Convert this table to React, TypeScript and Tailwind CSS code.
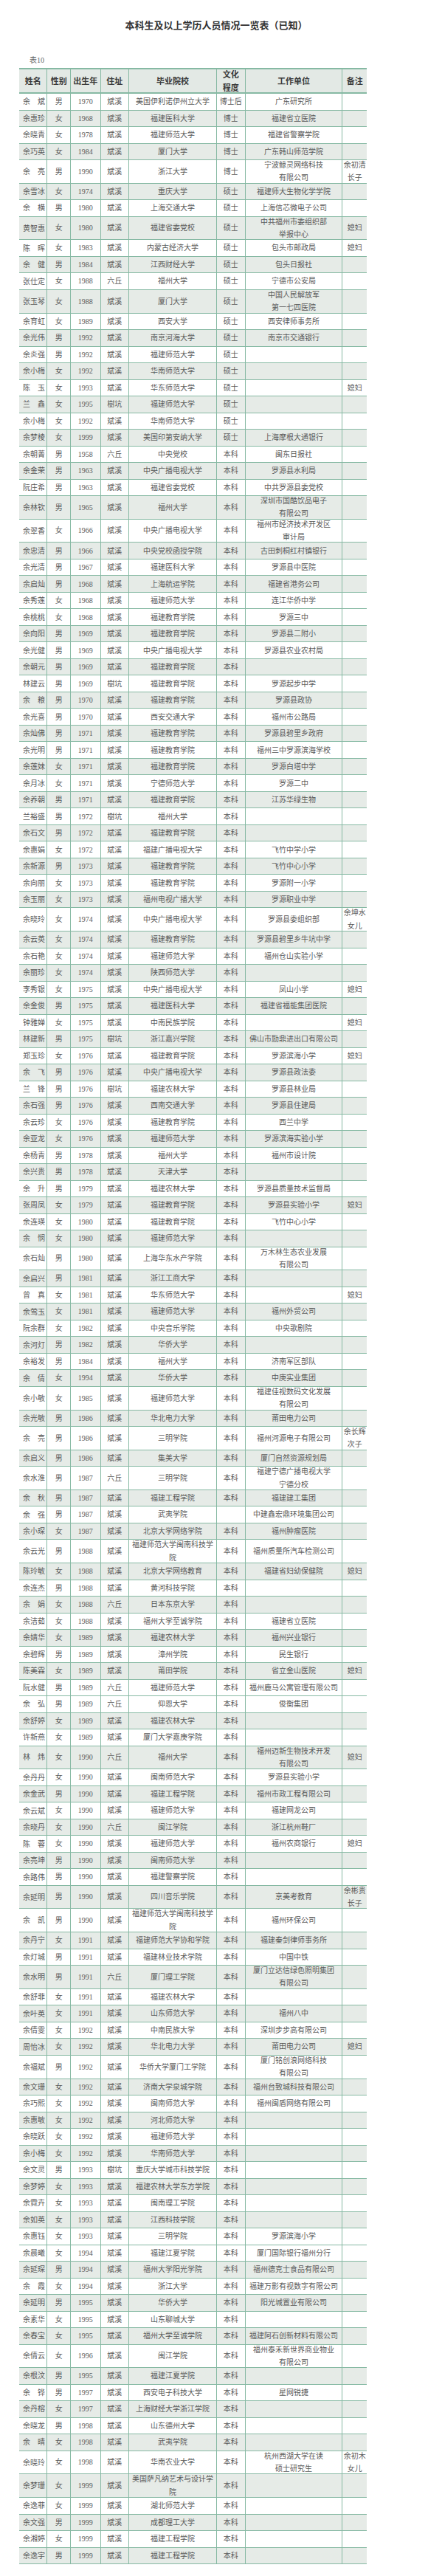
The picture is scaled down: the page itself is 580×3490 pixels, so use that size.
import React from 'react'

/* ── Data: name|sex|year|addr|school|degree|work|note   ("/" = line break) ── */
const RAW = `余斌|男|1970|斌溪|美国伊利诺伊州立大学|博士后|广东研究所|
余惠珍|女|1968|斌溪|福建医科大学|博士|福建省立医院|
余晓青|女|1978|斌溪|福建师范大学|博士|福建省警察学院|
余巧英|女|1984|斌溪|厦门大学|博士|广东韩山师范学院|
余亮|男|1990|斌溪|浙江大学|博士|宁波鲸灵网络科技/有限公司|余初清/长子
余雪冰|女|1974|斌溪|重庆大学|硕士|福建师大生物化学学院|
余横|男|1980|斌溪|上海交通大学|硕士|上海信芯微电子公司|
黄智惠|女|1980|斌溪|福建省委党校|硕士|中共福州市委组织部/举报中心|媳妇
陈晖|女|1983|斌溪|内蒙古经济大学|硕士|包头市邮政局|媳妇
余健|男|1984|斌溪|江西财经大学|硕士|包头日报社|
张仕定|女|1988|六丘|福州大学|硕士|宁德市公安局|
张玉琴|女|1988|斌溪|厦门大学|硕士|中国人民解放军/第一七四医院|
余育虹|女|1989|斌溪|西安大学|硕士|西安律师事务所|
余光伟|男|1992|斌溪|南京河海大学|硕士|南京市交通银行|
余炎强|男|1992|斌溪|福建师范大学|硕士||
余小梅|女|1992|斌溪|华南师范大学|硕士||
陈玉|女|1993|斌溪|华东师范大学|硕士||媳妇
兰鑫|女|1995|樹坑|福建师范大学|硕士||
余小梅|女|1992|斌溪|华南师范大学|硕士||
余梦棱|女|1999|斌溪|美国印第安纳大学|硕士|上海摩根大通银行|
余朝菁|男|1958|六丘|中央党校|本科|闽东日报社|
余金荣|男|1963|斌溪|中央广播电视大学|本科|罗源县水利局|
阮庄希|男|1963|斌溪|福建省委党校|本科|中共罗源县委党校|
余林钦|男|1965|斌溪|福州大学|本科|深圳市国酷饮品电子/有限公司|
余翠香|女|1966|斌溪|中央广播电视大学|本科|福州市经济技术开发区/审计局|
余忠清|男|1966|斌溪|中央党校函授学院|本科|古田刺桐红村镇银行|
余光清|男|1967|斌溪|福建医科大学|本科|罗源县中医院|
余启灿|男|1968|斌溪|上海航运学院|本科|福建省港务公司|
余秀莲|女|1968|斌溪|福建师范大学|本科|连江华侨中学|
余桃桃|女|1968|斌溪|福建教育学院|本科|罗源三中|
余向阳|男|1969|斌溪|福建教育学院|本科|罗源县二附小|
余光健|男|1969|斌溪|中央广播电视大学|本科|罗源县农业农村局|
余朝元|男|1969|斌溪|福建教育学院|本科||
林建云|男|1969|樹坑|福建教育学院|本科|罗源起步中学|
余粮|男|1970|斌溪|福建教育学院|本科|罗源县政协|
余光喜|男|1970|斌溪|西安交通大学|本科|福州市公路局|
余灿佛|男|1971|斌溪|福建教育学院|本科|罗源县碧里乡政府|
余光明|男|1971|斌溪|福建教育学院|本科|福州三中罗源滨海学校|
余莲妹|女|1971|斌溪|福建教育学院|本科|罗源白塔中学|
余月冰|女|1971|斌溪|宁德师范大学|本科|罗源二中|
余养朝|男|1971|斌溪|福建教育学院|本科|江苏华绿生物|
兰裕盛|男|1972|樹坑|福州大学|本科||
余石文|男|1972|斌溪|福建教育学院|本科||
余惠娟|女|1972|斌溪|福建广播电视大学|本科|飞竹中学小学|
余新源|男|1973|斌溪|福建教育学院|本科|飞竹中心小学|
余向丽|女|1973|斌溪|福建教育学院|本科|罗源附一小学|
余玉丽|女|1973|斌溪|福州电视广播大学|本科|罗源职业中学|
余晓玲|女|1974|斌溪|中央广播电视大学|本科|罗源县委组织部|余坤水/女儿
余云英|女|1974|斌溪|福建教育学院|本科|罗源县碧里乡牛坑中学|
余石艳|女|1974|斌溪|福建师范大学|本科|福州仓山实验小学|
余丽珍|女|1974|斌溪|陕西师范大学|本科||
李秀银|女|1975|斌溪|中央广播电视大学|本科|凤山小学|媳妇
余金俊|男|1975|斌溪|福建医科大学|本科|福建省福能集团医院|
钟雅婵|女|1975|斌溪|中南民族学院|本科||媳妇
林建新|男|1975|樹坑|浙江嘉兴学院|本科|佛山市励鼎进出口有限公司|
郑玉珍|女|1976|斌溪|福建教育学院|本科|罗源滨海小学|媳妇
余飞|男|1976|斌溪|中央广播电视大学|本科|罗源县政法委|
兰锋|男|1976|樹坑|福建农林大学|本科|罗源县林业局|
余石强|男|1976|斌溪|西南交通大学|本科|罗源县住建局|
余云珍|女|1976|斌溪|福建教育学院|本科|西兰中学|
余亚龙|女|1976|斌溪|福建师范大学|本科|罗源滨海实验小学|
余杨青|男|1978|斌溪|福州大学|本科|福州市设计院|
余兴贵|男|1978|斌溪|天津大学|本科||
余升|男|1979|斌溪|福建农林大学|本科|罗源县质量技术监督局|
张周凤|女|1979|斌溪|福建教育学院|本科|罗源县实验小学|媳妇
余连瑛|女|1980|斌溪|福建教育学院|本科|飞竹中心小学|
余悯|女|1980|斌溪|福建师范大学|本科||
余石灿|男|1980|斌溪|上海华东水产学院|本科|万木林生态农业发展/有限公司|
余启兴|男|1981|斌溪|浙江工商大学|本科||
曾真|女|1981|斌溪|华东师范大学|本科||媳妇
余莺玉|女|1981|斌溪|福建师范大学|本科|福州外贸公司|
阮余群|女|1982|斌溪|中央音乐学院|本科|中央歌剧院|
余河灯|男|1982|斌溪|华侨大学|本科||
余裕发|男|1984|斌溪|福州大学|本科|济南军区部队|
余倩|女|1994|斌溪|华侨大学|本科|中庚实业集团|
余小敏|女|1985|斌溪|福建师范大学|本科|福建佳视数码文化发展/有限公司|
余光敏|男|1986|斌溪|华北电力大学|本科|莆田电力公司|
余亮|男|1986|斌溪|三明学院|本科|福州河源电子有限公司|余长辉/次子
余启义|男|1986|斌溪|集美大学|本科|厦门自然资源规划局|
余水淮|男|1987|六丘|三明学院|本科|福建宁德广播电视大学/宁德分校|
余秋|男|1987|斌溪|福建工程学院|本科|福建建工集团|
余强|男|1987|斌溪|武夷学院||中建鑫宏鼎环境集团公司|
余小琛|女|1987|斌溪|北京大学网络学院|本科|福州肿瘤医院|
余云光|男|1988|斌溪|福建师范大学闽南科技学/院|本科|福州质量所汽车检测公司|
陈玲敏|女|1988|斌溪|北京大学网络教育|本科|福建省妇幼保健院|媳妇
余连杰|男|1988|斌溪|黄河科技学院|本科||
余娟|女|1988|六丘|日本东京大学|本科||
余洁茹|女|1988|斌溪|福州大学至诚学院|本科|福建省立医院|
余婧华|女|1989|斌溪|福建农林大学|本科|福州兴业银行|
余碧辉|男|1989|斌溪|漳州学院|本科|民生银行|
陈美霖|女|1989|斌溪|莆田学院|本科|省立金山医院|媳妇
阮水健|男|1989|六丘|福建师范大学|本科|福州鹿马公寓管理有限公司|
余弘|男|1989|六丘|仰恩大学|本科|俊衡集团|
余舒婷|女|1989|斌溪|福建农林大学|本科||
许新燕|女|1989|斌溪|厦门大学嘉庚学院|本科||
林炜|女|1990|六丘|福州大学|本科|福州迈新生物技术开发/有限公司|媳妇
余丹丹|女|1990|斌溪|闽南师范大学|本科|罗源县实验小学|
余金武|男|1990|斌溪|福建工程学院|本科|福州市政工程有限公司|
余云斌|女|1990|斌溪|福建师范大学|本科|福建网龙公司|
余晓丹|女|1990|六丘|闽江学院|本科|浙江杭州鞋厂|
陈蓉|女|1990|斌溪|福建师范大学|本科|福州农商银行|媳妇
余亮坤|男|1990|斌溪|闽南师范大学|本科||
余路伟|男|1990|斌溪|福建警察学院|本科||
余延明|男|1990|斌溪|四川音乐学院|本科|京美考教育|余彬贵/长子
余凯|男|1990|斌溪|福建师范大学闽南科技学/院|本科|福州环保公司|
余丹宁|女|1991|斌溪|福建师范大学协和学院|本科|福建秦剑律师事务所|
余灯城|男|1991|斌溪|福建林业技术学院|本科|中国中铁|
余水明|男|1991|六丘|厦门理工学院|本科|厦门立达信绿色照明集团/有限公司|
余舒菲|女|1991|斌溪|福建农林大学|本科||
余叶英|女|1991|斌溪|山东师范大学|本科|福州八中|
余倩雯|女|1992|斌溪|中南民族大学|本科|深圳步步高有限公司|
周怡冰|女|1992|斌溪|华北电力大学|本科|莆田电力公司|媳妇
余福斌|男|1992|斌溪|华侨大学厦门工学院|本科|厦门铭创浪网络科技/有限公司|
余文珊|女|1992|斌溪|济南大学泉城学院|本科|福州台致城科技有限公司|
余巧熙|女|1992|斌溪|闽南师范大学|本科|福州闽盾网络有限公司|
余惠敏|女|1992|斌溪|河北师范大学|本科||
余晓跃|女|1992|斌溪|福建师范大学|本科||
余小梅|女|1992|斌溪|华南师范大学|本科||
余文灵|男|1993|樹坑|重庆大学城市科技学院|本科||
余梦婷|女|1993|斌溪|福建农林大学东方学院|本科||
余霓卉|女|1993|斌溪|闽南理工学院|本科||
余如英|女|1993|斌溪|江西科技学院|本科||
余惠钰|女|1993|斌溪|三明学院|本科|罗源滨海小学|
余晨曦|女|1994|斌溪|福建江夏学院|本科|厦门国际银行福州分行|
余延琛|男|1994|斌溪|福州大学阳光学院|本科|福州德克士食品有限公司|
余霞|女|1994|斌溪|浙江大学|本科|福建万影有视数字有限公司|
余延明|男|1995|斌溪|华侨大学|本科|阳光城置业有限公司|
余素华|女|1995|斌溪|山东聊城大学|本科||
余春宝|女|1995|斌溪|福州大学至诚学院|本科|福建阿石创新材料有限公司|
余倩云|女|1996|斌溪|闽江学院|本科|福州泰禾新世界商业物业/有限公司|
余根汶|男|1995|斌溪|福建江夏学院|本科||
余铧|男|1997|斌溪|西安电子科技大学|本科|星网锐捷|
余丹榕|女|1997|斌溪|上海财经大学浙江学院|本科||
余晓龙|男|1998|斌溪|山东德州大学|本科||
余晴|女|1998|斌溪|武夷学院|本科||
余晓玲|女|1998|斌溪|华南农业大学|本科|杭州西湖大学在读/硕士研究生|余初木/女儿
余梦珊|女|1999|斌溪|美国萨凡纳艺术与设计学/院|本科||
余逸菲|女|1999|斌溪|湖北师范大学|本科||
余文强|男|1999|斌溪|成都理工大学|本科||
余湘婷|女|1999|斌溪|福建工程学院|本科||
余逸宇|男|1999|斌溪|福建工程学院|本科||`

const ROWS = RAW.split('\n').map(l => l.split('|'))

// striping in the source skips a beat in a few places (rows 30, 93, 124 stay white)
function isGrey(i: number) {
  const n = i + 1
  if (n === 30 || n === 93 || n === 124) return false
  if (n < 30) return n % 2 === 0
  if (n < 93) return n % 2 === 1
  if (n < 124) return n % 2 === 0
  return n % 2 === 1
}

const COLS = [
  'w-[38.3px]', 'w-[31.7px]', 'w-[40.7px]', 'w-[38.3px]',
  'w-[119px]', 'w-[38.7px]', 'w-[131.7px]', 'w-[33px]',
]
const HEAD = ['姓名', '性别', '出生年', '住址', '毕业院校', '文化/程度', '工作单位', '备注']
const LINE = 'border-[#86b9a3]'

function fmtName(n: string) {
  return n.length === 2 ? n[0] + '\u3000' + n[1] : n
}

export default function App() {
  return (
    <div className="w-[580px] h-[3490px] overflow-hidden bg-white font-['Liberation_Serif','Noto_Sans_CJK_SC',serif] text-[#5a5a5a]">
      <h1 className="pt-[27px] pl-[6px] text-center text-[13px] leading-[16px] font-bold text-[#333]">
        本科生及以上学历人员情况一览表（已知）
      </h1>
      <div className="mt-[33px] pl-[40px] text-[10px] leading-[12px] text-[#666]">表10</div>

      <div className="mt-[4px] ml-[26px] w-[471.4px] text-[10px]">
        {/* header */}
        <div className={'flex h-[35px] border-y-2 bg-[#e3e9e5] ' + LINE}>
          {HEAD.map((h, i) => (
            <div
              key={h}
              className={
                COLS[i] +
                ' shrink-0 flex flex-col items-center justify-center text-[11px] font-bold text-[#3a3a3a] whitespace-nowrap ' +
                (i < HEAD.length - 1 ? 'border-r ' + LINE : '')
              }>
              {h.split('/').map((p, k) => (
                <div key={k} className="h-[18px] leading-[18px]">{p}</div>
              ))}
            </div>
          ))}
        </div>

        {/* body */}
        {ROWS.map((r, ri) => {
          const double = r.some(c => c.includes('/'))
          return (
            <div
              key={ri}
              className={
                'flex border-b ' + LINE + ' ' +
                (double ? 'h-[31.7px] ' : 'h-[22.5px] ') +
                (isGrey(ri) ? 'bg-[#e6ebe7]' : 'bg-white')
              }>
              {r.map((c, ci) => (
                <div
                  key={ci}
                  className={
                    COLS[ci] +
                    ' shrink-0 flex flex-col justify-center whitespace-nowrap ' +
                    (ci === 0 ? 'items-start pl-[5px] ' : 'items-center ') +
                    (ci < r.length - 1 ? 'border-r ' + LINE : '')
                  }>
                  {ci === 0
                    ? fmtName(c)
                    : c.split('/').map((p, k) => (
                        <div key={k} className="h-[17.3px] leading-[17.3px] shrink-0">{p}</div>
                      ))}
                </div>
              ))}
            </div>
          )
        })}
      </div>
    </div>
  )
}
